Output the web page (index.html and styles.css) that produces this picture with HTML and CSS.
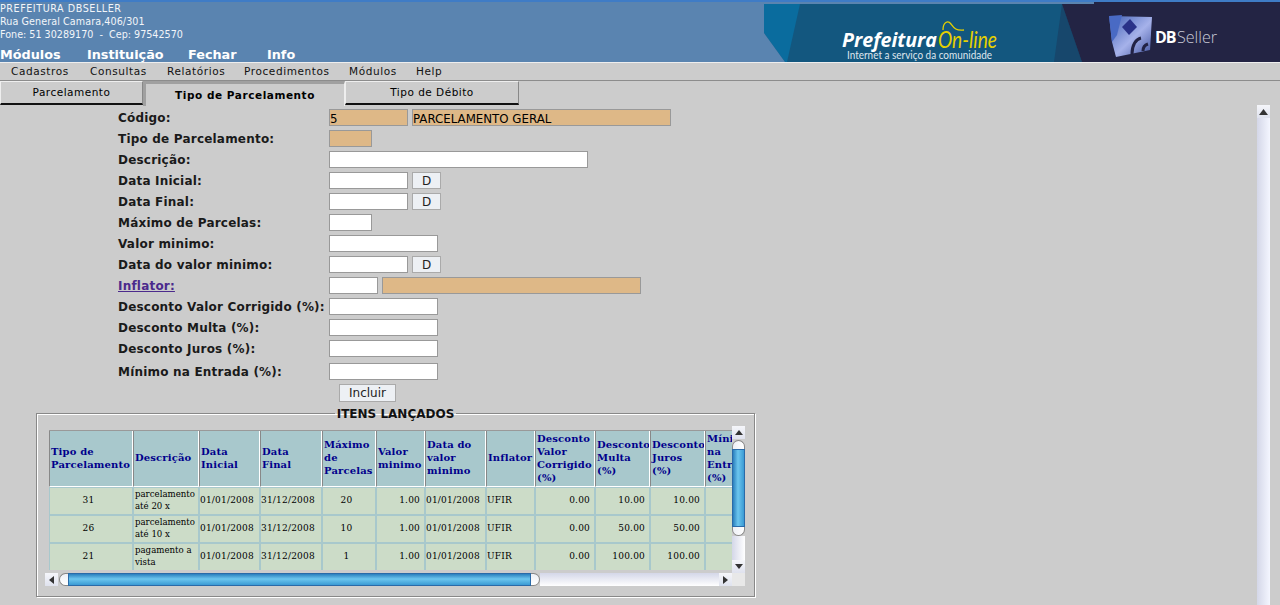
FILE: index.html
```html
<!DOCTYPE html>
<html lang="pt-BR">
<head>
<meta charset="utf-8">
<title>Tipo de Parcelamento</title>
<link rel="stylesheet" href="styles.css">
</head>
<body>
<header class="top">
  <div class="top-left">
    <div class="info">
      <div class="info-name">PREFEITURA DBSELLER</div>
      <div class="info-addr">Rua General Camara,406/301</div>
      <div>Fone: 51 30289170 &nbsp;-&nbsp; Cep: 97542570</div>
    </div>
    <nav class="mainnav"><a>Módulos</a><a>Instituição</a><a>Fechar</a><a>Info</a></nav>
  </div>
  <svg class="brand" width="516" height="60" viewBox="764 2 516 60">
    <defs>
      <linearGradient id="cube" x1="0" y1="0" x2="1" y2="1">
        <stop offset="0" stop-color="#3f5fb4"/><stop offset=".55" stop-color="#a6b2ea"/><stop offset="1" stop-color="#3c4f9c"/>
      </linearGradient>
      <filter id="soft"><feGaussianBlur stdDeviation=".6"/></filter>
    </defs>
    <rect x="764" y="4" width="516" height="58" fill="#13577f"/>
    <polygon points="764,4 800,4 787,62 785,62 764,33" fill="#0a6c9e"/>
    <polygon points="764,33 785,62 764,62" fill="#5a84b0"/>
    <polygon points="1062,4 1082,62 1054,62" fill="#17476c"/>
    <polygon points="1062,4 1094,4 1094,2 1280,2 1280,62 1082,62" fill="#232444"/>
    <text class="b-pref" x="842" y="47" textLength="95" lengthAdjust="spacingAndGlyphs">Prefeitura</text>
    <text class="b-on" x="938" y="48" textLength="59" lengthAdjust="spacingAndGlyphs">On-line</text>
    <path class="b-wave" d="M943 30C943 22 948 20 951 24S956 31 964 30"/>
    <text class="b-sub" x="847" y="58.5" textLength="145" lengthAdjust="spacingAndGlyphs">Internet a serviço da comunidade</text>
    <g filter="url(#soft)">
      <polygon points="1109,16 1152,17 1150,50 1116,57 1112,42" fill="url(#cube)"/>
      <polygon points="1109,16 1122,15 1117,35 1112,42" fill="#4a6ac4"/>
      <polygon points="1122,27 1130,19 1137,27 1129,35" fill="#2a3388"/>
      <path d="M1132 54c0-9 4-15 9-16M1143 51c0-4 2-6 5-7" fill="none" stroke="#232444" stroke-width="3"/>
    </g>
    <text class="b-db" x="1155" y="43">DB</text>
    <text class="b-seller" x="1177" y="43" textLength="40" lengthAdjust="spacingAndGlyphs">Seller</text>
  </svg>
</header>

<nav class="menubar"><a>Cadastros</a><a>Consultas</a><a>Relatórios</a><a>Procedimentos</a><a>Módulos</a><a>Help</a></nav>

<div class="tabs">
  <div class="tab tab-a">Parcelamento</div>
  <div class="tab-active">Tipo de Parcelamento</div>
  <div class="tab tab-c">Tipo de Débito</div>
</div>

<form class="form">
  <div class="row"><label>Código:</label><span class="in ro w79">5</span><span class="in ro w259">PARCELAMENTO GERAL</span></div>
  <div class="row"><label>Tipo de Parcelamento:</label><span class="in ro w43"></span></div>
  <div class="row"><label>Descrição:</label><span class="in w259"></span></div>
  <div class="row"><label>Data Inicial:</label><span class="in w79"></span><span class="btn-d">D</span></div>
  <div class="row"><label>Data Final:</label><span class="in w79"></span><span class="btn-d">D</span></div>
  <div class="row"><label>Máximo de Parcelas:</label><span class="in w43"></span></div>
  <div class="row"><label>Valor minimo:</label><span class="in w109"></span></div>
  <div class="row"><label>Data do valor minimo:</label><span class="in w79"></span><span class="btn-d">D</span></div>
  <div class="row"><label class="link">Inflator:</label><span class="in w49"></span><span class="in ro w259">&nbsp;</span></div>
  <div class="row"><label>Desconto Valor Corrigido (%):</label><span class="in w109"></span></div>
  <div class="row"><label>Desconto Multa (%):</label><span class="in w109"></span></div>
  <div class="row"><label>Desconto Juros (%):</label><span class="in w109"></span></div>
  <div class="row row-tall"><label>Mínimo na Entrada (%):</label><span class="in w109"></span></div>
  <div class="row row-btn"><span class="btn-inc">Incluir</span></div>
</form>

<fieldset class="items">
  <legend>ITENS LANÇADOS</legend>
  <div class="panel">
    <div class="view">
      <table class="grid">
        <colgroup><col><col><col><col><col><col><col><col><col><col><col><col></colgroup>
        <thead>
          <tr>
            <th>Tipo de Parcelamento</th><th>Descrição</th><th>Data Inicial</th><th>Data Final</th><th>Máximo de Parcelas</th><th>Valor minimo</th><th>Data do valor minimo</th><th>Inflator</th><th>Desconto Valor Corrigido (%)</th><th>Desconto Multa (%)</th><th>Desconto Juros (%)</th><th>Mínimo na Entrada (%)</th>
          </tr>
        </thead>
        <tbody>
          <tr><td class="c">31</td><td class="d">parcelamento até 20 x</td><td>01/01/2008</td><td>31/12/2008</td><td class="c">20</td><td class="r">1.00</td><td>01/01/2008</td><td>UFIR</td><td class="r">0.00</td><td class="r">10.00</td><td class="r">10.00</td><td class="r">0.00</td></tr>
          <tr><td class="c">26</td><td class="d">parcelamento até 10 x</td><td>01/01/2008</td><td>31/12/2008</td><td class="c">10</td><td class="r">1.00</td><td>01/01/2008</td><td>UFIR</td><td class="r">0.00</td><td class="r">50.00</td><td class="r">50.00</td><td class="r">0.00</td></tr>
          <tr><td class="c">21</td><td class="d">pagamento a vista</td><td>01/01/2008</td><td>31/12/2008</td><td class="c">1</td><td class="r">1.00</td><td>01/01/2008</td><td>UFIR</td><td class="r">0.00</td><td class="r">100.00</td><td class="r">100.00</td><td class="r">0.00</td></tr>
        </tbody>
      </table>
    </div>
    <div class="vbar">
      <span class="sb-btn"><i class="tri up"></i></span>
      <span class="vcap vcap-t"></span><span class="vthumb"></span><span class="vcap vcap-b"></span>
      <span class="vtrack"></span>
      <span class="sb-btn"><i class="tri down"></i></span>
    </div>
    <div class="hbar">
      <span class="sb-btn sb-h"><i class="tri left"></i></span>
      <span class="hcap hcap-l"></span><span class="hthumb"></span><span class="hcap hcap-r"></span>
      <span class="htrack"></span>
      <span class="sb-btn sb-h"><i class="tri right"></i></span>
    </div>
    <div class="corner"></div>
  </div>
</fieldset>

<div class="pagebar">
  <span class="sb-btn"><svg class="page-up" width="9" height="6" viewBox="0 0 9 6"><polygon points="4.5,0 9,6 0,6" fill="#333"/></svg></span>
  <span class="pagetrack"></span>
</div>
</body>
</html>
```
FILE: styles.css
```css
* { box-sizing: border-box; }
html, body { margin: 0; height: 605px; overflow: hidden; }
body { background: #cccccc; font-family: "DejaVu Sans", sans-serif; color: #000; position: relative; }

.top { height: 62px; display: flex; justify-content: space-between; align-items: flex-end; background: #5a84b0; border-top: 2px solid #3f7cc6; }
.top-left { display: flex; flex-direction: column; height: 60px; color: #fff; }
.info { font-size: 9.6px; line-height: 13px; height: 47px; color: #f2f5f9; }
.info-name { letter-spacing: .55px; }
.info-addr { letter-spacing: .08px; }
.mainnav { display: flex; font-size: 12.8px; font-weight: bold; line-height: 14px; padding-top: 1px; }
.mainnav a:nth-child(1) { width: 87px; }
.mainnav a:nth-child(2) { width: 101px; }
.mainnav a:nth-child(3) { width: 79px; }
.brand { display: block; }
.b-pref { font: italic bold 20px "Open Sans", sans-serif; fill: #fff; }
.b-on { font: italic 400 24px "Lato", sans-serif; fill: #e6d000; }
.b-wave { fill: none; stroke: #e6d000; stroke-width: 1.3; }
.b-sub { font: 10.5px "Lato", sans-serif; fill: #dfe6ee; }
.b-db { font: bold 16px "Open Sans", sans-serif; fill: #fff; letter-spacing: -1px; }
.b-seller { font: 300 16px "Open Sans", sans-serif; fill: #c9cbd8; }

.menubar { height: 19px; display: flex; padding: 0 0 1px 11px; align-items: center; font-size: 10.5px; letter-spacing: .6px; border-top: 1px solid #eee; border-bottom: 1px solid #8c8c8c; color: #111; }
.menubar a:nth-child(1) { width: 79px; }
.menubar a:nth-child(2) { width: 77px; }
.menubar a:nth-child(3) { width: 77px; }
.menubar a:nth-child(4) { width: 105px; }
.menubar a:nth-child(5) { width: 67px; }

.tabs { display: flex; height: 25px; }
.tab { height: 24px; display: flex; align-items: center; justify-content: center; font-size: 10.5px; letter-spacing: .5px; background: #ccc; border-left: 1px solid #eee; border-right: 1px solid #888; border-top: 1px solid #eee; border-bottom: 2px solid #111; padding-bottom: 1px; }
.tab-a { width: 143px; }
.tab-c { width: 174px; }
.tab-active { width: 202px; height: 25px; display: flex; align-items: center; justify-content: center; font-size: 10.5px; font-weight: bold; letter-spacing: .55px; border-left: 3px solid #a0a0a0; border-top: 3px solid #a0a0a0; border-right: 1px solid #eee; }

.form { padding: 1px 0 0 118px; height: 300px; }
.row { height: 21px; display: flex; align-items: center; gap: 4px; }
.row label { width: 207px; font-size: 12px; letter-spacing: .2px; font-weight: bold; color: #1a1a1a; flex: none; white-space: nowrap; }
.row-tall { height: 23px; padding-top: 2px; }
.row-btn { height: 20px; padding: 2px 0 0 221px; }
.link { color: #4b2a8c !important; text-decoration: underline; }
.in { height: 17px; background: #fff; border: 1px solid #999; font-size: 11.8px; line-height: 18px; padding-left: 0; overflow: hidden; display: block; }
.ro { background: #deb887; }
.w43 { width: 43px; } .w49 { width: 49px; } .w79 { width: 79px; } .w109 { width: 109px; } .w259 { width: 259px; }
.btn-d { width: 29px; height: 17px; background: #edf0f4; border: 1px solid #aaa; font-size: 12px; line-height: 17px; text-align: center; color: #222; }
.btn-inc { width: 57px; height: 18px; background: #edf0f4; border: 1px solid #aaa; font-size: 12px; line-height: 17px; text-align: center; color: #222; }

.items { width: 719px; height: 191px; margin: 0 0 0 36px; padding: 0 8px; border: 1px solid #888; box-shadow: inset 1px 1px #fff, 1px 1px #fff; }
.items legend { margin: 0 auto; padding: 1px 2px 0; font-size: 12px; font-weight: bold; line-height: 14px; color: #111; }
.panel { width: 700px; height: 160px; display: grid; grid-template-columns: 687px 13px; grid-template-rows: 147px 13px; margin-top: 5px; }
.view { overflow: hidden; padding: 4px 0 0 4px; }

.grid { border-collapse: separate; border-spacing: 0; table-layout: fixed; width: 711px; font-family: "DejaVu Serif", serif; background: #a8c8cc; border-top: 1px solid #999; }
.grid col:nth-child(1) { width: 84px; }
.grid col:nth-child(2) { width: 66px; }
.grid col:nth-child(3) { width: 61px; }
.grid col:nth-child(4) { width: 62px; }
.grid col:nth-child(5) { width: 54px; }
.grid col:nth-child(6) { width: 49px; }
.grid col:nth-child(7) { width: 61px; }
.grid col:nth-child(8) { width: 49px; }
.grid col:nth-child(9) { width: 60px; }
.grid col:nth-child(10) { width: 55px; }
.grid col:nth-child(11) { width: 55px; }
.grid col:nth-child(12) { width: 55px; }
.grid th { height: 56px; padding: 0 0 2px 1px; text-align: left; font-size: 10px; letter-spacing: .15px; line-height: 13px; color: #00008b; background: #a8c8cc; border-left: 1px solid #888; border-right: 1px solid #fff; border-bottom: 1px solid #fff; font-weight: bold; overflow: hidden; }
.grid td { height: 28px; padding: 0 0 2px; font-size: 9px; letter-spacing: .2px; line-height: 12px; background: #ccdcc8; border: 1px solid #a8c8cc; overflow: hidden; }
.grid tbody tr:last-child td { height: 27px; border-bottom: 0; }
.grid td.c { text-align: center; padding-right: 5px; }
.grid td.d { font-size: 8.6px; letter-spacing: 0; padding-left: 1px; }
.grid td.r { text-align: right; padding-right: 4px; }

.vbar { display: flex; flex-direction: column; }
.hbar { display: flex; grid-column: 1; grid-row: 2; }
.corner { background: #e8e8e8; }
.sb-btn { flex: none; width: 13px; height: 13px; display: flex; align-items: center; justify-content: center; background: linear-gradient(#f5f6fa, #dfe2ee); }
.tri { display: block; flex: none; width: 0; height: 0; border: 4px solid transparent; }
.tri.up { border-top: 0; border-bottom: 5px solid #333; }
.tri.down { border-bottom: 0; border-top: 5px solid #333; }
.tri.left { border-left: 0; border-right: 5px solid #333; }
.tri.right { border-right: 0; border-left: 5px solid #333; }
.vcap { flex: none; width: 13px; height: 9px; background: linear-gradient(90deg, #eef0f6, #fff); border: 1px solid #888; }
.vcap-t { border-radius: 7px 7px 0 0; border-bottom: 0; margin-top: 1px; }
.vcap-b { border-radius: 0 0 7px 7px; border-top: 0; }
.vthumb { flex: none; height: 78px; background: linear-gradient(90deg, #2a7fbe, #6cc6ee 45%, #3a9ad4); border: 1px solid #2a6aa8; }
.vtrack { flex: 1; background: linear-gradient(90deg, #d4d7e8, #fff); }
.hcap { flex: none; height: 13px; width: 9px; background: linear-gradient(#eef0f6, #fff); border: 1px solid #888; }
.hcap-l { border-radius: 7px 0 0 7px; border-right: 0; margin-left: 1px; }
.hcap-r { border-radius: 0 7px 7px 0; border-left: 0; }
.hthumb { flex: none; width: 463px; background: linear-gradient(#2a7fbe, #6cc6ee 45%, #3a9ad4); border: 1px solid #2a6aa8; }
.htrack { flex: 1; background: linear-gradient(#d4d7e8, #fff); }

.pagebar { position: absolute; left: 1257px; top: 105px; width: 13px; height: 500px; display: flex; flex-direction: column; }
.page-up { display: block; flex: none; }
.pagetrack { flex: 1; background: linear-gradient(90deg, #d4d7e8, #f4f6ff); }
```
